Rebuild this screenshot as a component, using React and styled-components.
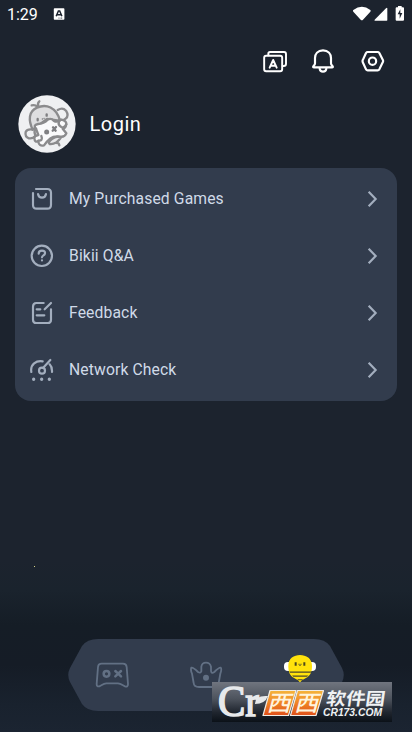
import React from "react";
import styled, { createGlobalStyle } from "styled-components";

const GlobalStyle = createGlobalStyle`
  *, *::before, *::after { box-sizing: border-box; }
  html, body { margin: 0; padding: 0; background: #1c232e; }
  body { font-family: Roboto, "Noto Sans", sans-serif; overflow: hidden; }
  svg { display: block; flex: none; }
`;

const Screen = styled.main`
  position: relative;
  display: flex;
  flex-direction: column;
  width: 412px;
  height: 732px;
  overflow: hidden;
  background: linear-gradient(
    to bottom,
    #1c232e 0,
    #1c232e 560px,
    #1a232d 590px,
    #151d26 625px,
    #151c26 665px,
    #19222e 705px,
    #1b2431 732px
  );
`;

const StatusBar = styled.header`
  display: flex;
  align-items: center;
  height: 28px;
  padding: 0 8px 0 7px;
  color: #fff;
`;

const Clock = styled.time`
  width: 46px;
  padding-top: 1px;
  font-size: 16px;
  line-height: 28px;
`;

const StatusIcons = styled.div`
  display: flex;
  margin-left: auto;
`;

const Toolbar = styled.nav`
  display: flex;
  justify-content: flex-end;
  gap: 24px;
  margin-top: 21px;
  padding-right: 27px;
`;

const ToolButton = styled.button`
  padding: 0;
  border: 0;
  background: none;
  color: #fff;
  margin-left: ${(p) => p.$shift || 0}px;
`;

const Profile = styled.section`
  display: flex;
  align-items: center;
  gap: 13.5px;
  height: 58px;
  margin: 22px 0 0 18px;
`;

const LoginLabel = styled.span`
  color: #fff;
  font-size: 20px;
  line-height: 28px;
  letter-spacing: 0.5px;
`;

const Card = styled.section`
  display: flex;
  flex-direction: column;
  height: 233px;
  margin: 15px 15px 0;
  padding: 2.5px 0;
  border-radius: 16px;
  background: #323c4d;
`;

const Row = styled.div`
  display: flex;
  align-items: center;
  height: 57px;
  padding: 0 18px 0 15px;
  color: #a3aebe;
`;

const RowLabel = styled.span`
  flex: 1;
  margin-left: 15px;
  color: #d0dae8;
  font-size: 15.7px;
  line-height: 20px;
  letter-spacing: 0.12px;
`;

const BottomNav = styled.nav`
  display: flex;
  align-items: flex-start;
  width: 276px;
  height: 72px;
  margin: auto 0 21px 68px;
  padding: 13px 27px 0;
  background: #323c4d;
  color: #627084;
  clip-path: path(
    "M30 0H246Q257 0 262 7L274 29Q277.5 36 274 43L262 65Q257 72 246 72H30Q19 72 14 65L2 43Q-1.5 36 2 29L14 7Q19 0 30 0Z"
  );
`;

const NavItem = styled.div`
  margin-top: ${(p) => p.$top}px;
  margin-left: ${(p) => p.$left || 0}px;
`;

const Spark = styled.i`
  position: absolute;
  left: 34px;
  top: 566px;
  width: 1px;
  height: 1px;
  background: #d8d68a;
`;

const Watermark = styled.div`
  position: absolute;
  left: 212px;
  top: 682px;
  width: 180px;
  height: 40px;
  background: linear-gradient(to bottom, #70757f 0%, #4d535d 42%, #20262f 75%, #0b1118 100%);
`;

const stroke = {
  fill: "none",
  stroke: "currentColor",
  strokeLinecap: "round",
  strokeLinejoin: "round",
};

const NoticeIcon = () => (
  <svg width="12" height="12" viewBox="0 0 12 12">
    <rect x="0.8" y="0.2" width="10.6" height="11.6" rx="0.8" fill="#fff" />
    <path d="M3.2 8.3 5.4 3h1.3l2.2 5.3M4.2 6.7h3.7" fill="none" stroke="#1c232f" strokeWidth="1.5" />
    <path d="M5.5 10.1h1M7.5 10.1h1.7" stroke="#1c232f" strokeWidth="0.8" />
  </svg>
);

const SignalIcons = () => (
  <svg width="56" height="20" viewBox="0 0 168 60">
    <path d="M16 18Q42 -1 67 18Q69 20 67 23L45 47Q42 51 38 47L16 23Q14 20 16 18Z" fill="#fff" />
    <path d="M118 14V48Q118 50 116 50H81Q78 50 80 47L114 13Q118 9 118 14Z" fill="#fff" />
    <path d="M150 6h11v4h4q3 0 3 3v34q0 3-3 3h-19q-3 0-3-3v-34q0-3 3-3h4z" fill="#fff" />
    <path d="M157 16 149 31h6v13l8-17h-6z" fill="#1c232f" />
  </svg>
);

const TranslateIcon = () => (
  <svg width="24" height="24" viewBox="39 27 72 72" {...stroke} strokeWidth="5.800">
    <rect x="42.500" y="47.500" width="54" height="46" rx="6" />
    <path d="M55 46V41Q55 36 60 36H102Q108 36 108 42V71Q108 78 101 78H98" />
    <path d="M59 83 69.500 60 80 83M62 77H77" />
  </svg>
);

const BellIcon = () => (
  <svg width="24" height="24" viewBox="183 27 72 72" {...stroke} strokeWidth="6.500">
    <path d="M219 31C203 31 195 42 195 54V70Q195 74 192 76L190 79Q188 82 192 82H246Q250 82 248 79L246 76Q243 74 243 70V54C243 42 235 31 219 31Z" />
    <path d="M209 86Q210 95 219 95T229 86" />
  </svg>
);

const SettingsIcon = () => (
  <svg width="24" height="24" viewBox="333 27 72 72" {...stroke} strokeWidth="6.500">
    <path d="M353 36H383Q386 36 388 39L399 61Q400 63 399 65L388 88Q386 91 383 91H353Q350 91 348 88L338 66Q337 63 338 61L348 39Q350 36 353 36Z" />
    <circle cx="367.500" cy="63.500" r="11" />
  </svg>
);

const Avatar = () => (
  <svg width="58" height="58" viewBox="24 20 174 174">
    <circle cx="111" cy="107" r="86" fill="#eff0f2" />
    <g fill="#eff0f2" stroke="#8b8b8d" strokeWidth="7" strokeLinecap="round" strokeLinejoin="round">
      <path d="M82 56Q76 48 65 51M85 53Q82 44 88 39" fill="none" />
      <path d="M143 65Q158 56 168 67Q178 82 167 91Q159 98 150 94" />
      <path d="M68 124Q52 121 47 131Q44 146 57 150Q68 152 76 143" />
      <path d="M68 124C55 96 55 69 81 58C108 46 139 56 150 97L142 96L111 92Z" fill="#dedee0" />
      <path d="M78 121Q68 110 84 107Q102 106 113 94Q123 88 131 97Q142 104 154 94Q169 97 169 107Q167 120 158 121L169 135Q164 147 151 145Q132 142 121 150Q111 158 102 171Q86 175 85 158Q74 164 73 149Q73 142 85 140Z" fill="#fafafb" />
      <path d="M78 121Q71 128 75 138M85 157Q100 158 94 143M148 97Q142 109 154 116Q163 120 169 108" fill="none" />
      <path d="M116 163Q124 149 143 145L153 147Q139 169 119 167ZM139 164Q146 162 148 171" fill="#e8e8ea" />
    </g>
    <g fill="none" stroke="#7f7f82" strokeLinecap="round">
      <path d="M83 92V96M110 78V82" strokeWidth="7" />
      <path d="M97 92H97.500M102 90H102.500" strokeWidth="4" />
      <circle cx="110" cy="131" r="4" strokeWidth="7" />
      <path d="M129 117 137 127M138 116 128 127" strokeWidth="7" />
    </g>
  </svg>
);

const BagIcon = () => (
  <svg width="24" height="24" viewBox="60 66 72 72" {...stroke} strokeWidth="6.500">
    <path d="M78 72H112Q123 72 123 83V119Q123 131 112 131H80Q69 131 69 120V84" />
    <path d="M84 87Q86 98 96 98T108 87" />
  </svg>
);

const HelpIcon = () => (
  <svg width="24" height="24" viewBox="60 237 72 72" {...stroke} strokeWidth="6.500">
    <circle cx="95.500" cy="272.500" r="30.500" />
    <path d="M86 266Q86 257 96 257T105 265C105 271 96 271 96 277M96 286V286.500" />
  </svg>
);

const FeedbackIcon = () => (
  <svg width="24" height="24" viewBox="60 48 72 72" {...stroke} strokeWidth="6.500">
    <path d="M101 54H79Q69 54 69 65V104Q69 114 79 114H113Q123 114 123 104V73M123 54 104 73M80 73H91M80 91H103" />
  </svg>
);

const NetworkIcon = () => (
  <svg width="24" height="24" viewBox="60 219 72 72" {...stroke} strokeWidth="6.500">
    <path d="M64 261C60 237 79 226 98 229M119 238Q127 246 126 261M99 249 121 225" />
    <circle cx="96" cy="257" r="9" />
    <path d="M71 282.500V283M95 282.500V283M118 282.500V283" strokeWidth="10" />
  </svg>
);

const Chevron = () => (
  <svg width="12" height="18" viewBox="81 75 36 54" {...stroke} strokeWidth="6.500" strokeLinecap="butt" strokeLinejoin="miter">
    <path d="M86 80 107 102 86 124" />
  </svg>
);

const GamepadIcon = () => (
  <svg width="35" height="28" viewBox="105 93 105 84" {...stroke} strokeWidth="5.500">
    <path d="M125 101H189Q199 101 200 111L204 162Q204 172 195 169C186 165 184 161 174 160H139C129 161 127 165 118 169Q110 171 110 162L114 111Q115 101 125 101Z" />
    <circle cx="139.500" cy="131.500" r="8.500" strokeWidth="7.500" />
    <path d="M166 123 183 139M183 123 166 139" strokeWidth="7.500" />
  </svg>
);

const CrownIcon = () => (
  <svg width="34" height="30" viewBox="387 90 102 90" {...stroke} strokeWidth="5.500">
    <path d="M394 113Q391 121 396 131L401 159Q402 171 417 171H458Q474 171 476 159L481 131Q486 117 482 113Q478 111 463 126Q454 132 453 123V110Q450 98 438 98T424 110V124Q422 131 414 126Q399 111 394 113Z" />
    <circle cx="438" cy="143" r="9" fill="currentColor" stroke="none" />
  </svg>
);

const BeeIcon = () => (
  <svg width="34" height="30" viewBox="234 36 102 90">
    <path d="M277 48Q275 43 279 40M292 48Q295 43 291 40" fill="none" stroke="#4b492e" strokeWidth="3" />
    <rect x="237" y="66" width="29" height="27" rx="12" fill="#fff" />
    <rect x="304" y="66" width="29" height="27" rx="12" fill="#fff" />
    <path d="M250 77C250 55 267 45 285 45S321 55 321 77Q322 101 307 112L291 121 285 127 279 121 262 111Q249 101 250 77Z" fill="#ffe20c" />
    <path d="M253 94.500H319L317 98.500H255ZM261 106.500H310L306 110.500H265Z" fill="#49442c" />
    <path d="M277 118H294L291 121H280Z" fill="#49442c" />
    <path d="M272 67V77M298 67V77" stroke="#4b481c" strokeWidth="6" />
    <path d="M282 71V75Q285 78 288 75V71" fill="none" stroke="#736b1d" strokeWidth="3" />
  </svg>
);

const WatermarkLogo = () => (
  <svg width="180" height="40" viewBox="0 0 180 40" overflow="visible">
    <defs>
      <linearGradient id="orange" x1="0" y1="0" x2="0" y2="1">
        <stop offset="0" stopColor="#f5b53c" />
        <stop offset="0.5" stopColor="#ef8426" />
        <stop offset="1" stopColor="#e0501a" />
      </linearGradient>
    </defs>
    <text x="6" y="34" fontFamily="Liberation Serif, serif" fontSize="44" fill="#e7e9eb" stroke="#e7e9eb" strokeWidth="1.600" textLength="41" lengthAdjust="spacingAndGlyphs">Cr</text>
    <path d="M43 21.500Q43 13 56 14Q53 22 43 22Z" fill="#e7e9eb" />
    {[0, 27.5].map((x) => (
      <g key={x} transform={`translate(${x} 0)`}>
        <path d="M58 8.500H84L76.500 33.500H51Z" fill="url(#orange)" stroke="#f1ece5" strokeWidth="1.200" strokeLinejoin="round" />
        <text transform="translate(54.500 29.300) skewX(-15)" fontFamily="Noto Sans CJK SC, sans-serif" fontSize="22" fontWeight="500" fill="#fff4dd" textLength="24" lengthAdjust="spacingAndGlyphs">西</text>
      </g>
    ))}
    <text transform="translate(113.500 22.500) skewX(-8)" fontFamily="Noto Sans CJK SC, sans-serif" fontSize="17.500" fontWeight="700" fill="#f0f2f4" textLength="59" lengthAdjust="spacingAndGlyphs">软件园</text>
    <text x="111" y="34" fontFamily="Liberation Sans, sans-serif" fontSize="10.500" fontStyle="italic" fontWeight="700" fill="#eef1f3" textLength="59" lengthAdjust="spacingAndGlyphs">CR173.COM</text>
  </svg>
);

const menu = [
  { label: "My Purchased Games", Icon: BagIcon },
  { label: "Bikii Q&A", Icon: HelpIcon },
  { label: "Feedback", Icon: FeedbackIcon },
  { label: "Network Check", Icon: NetworkIcon },
];

export default function App() {
  return (
    <>
      <GlobalStyle />
      <Screen>
        <StatusBar>
          <Clock>1:29</Clock>
          <NoticeIcon />
          <StatusIcons><SignalIcons /></StatusIcons>
        </StatusBar>
        <Toolbar>
          <ToolButton aria-label="Language"><TranslateIcon /></ToolButton>
          <ToolButton aria-label="Notifications"><BellIcon /></ToolButton>
          <ToolButton aria-label="Settings" $shift={2}><SettingsIcon /></ToolButton>
        </Toolbar>
        <Profile>
          <Avatar />
          <LoginLabel>Login</LoginLabel>
        </Profile>
        <Card>
          {menu.map(({ label, Icon }) => (
            <Row key={label}>
              <Icon />
              <RowLabel>{label}</RowLabel>
              <Chevron />
            </Row>
          ))}
        </Card>
        <BottomNav>
          <NavItem $top={9}><GamepadIcon /></NavItem>
          <NavItem $top={8} $left={59}><CrownIcon /></NavItem>
          <NavItem $top={0} $left={60}><BeeIcon /></NavItem>
        </BottomNav>
        <Spark />
        <Watermark><WatermarkLogo /></Watermark>
      </Screen>
    </>
  );
}
